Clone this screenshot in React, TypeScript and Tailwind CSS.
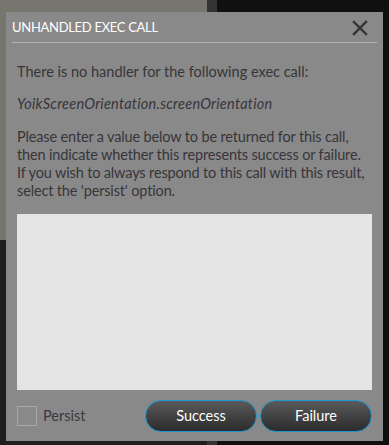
import React from 'react';

const App = () => {
  return (
    <div
      className="relative w-[389px] h-[445px] overflow-hidden bg-[#111111]"
      style={{ fontFamily: 'Lato, "Liberation Sans", sans-serif' }}
    >
      {/* Backdrop: dimmed map panel on the left, dark app chrome on the right */}
      <div className="flex h-full">
        <div className="w-[207px] h-full flex flex-col">
          <div className="h-[240px] bg-[#76766e]" />
          <div className="flex-1 bg-[#1e1e1e]" />
        </div>
        <div className="w-[10px] h-full bg-[#333333]" />
        <div className="flex-1 bg-[#101010]" />
      </div>

      {/* Modal */}
      <div className="absolute left-[6px] top-[12px] w-[377px] h-[429px] bg-[#898989] flex flex-col">
        <div className="mx-[6px] h-[31px] flex items-center justify-between border-b border-[#b4b4b4]">
          <span className="text-white text-[13px] tracking-[-0.3px] pt-[2px]">UNHANDLED EXEC CALL</span>
          <svg width="16" height="16" viewBox="0 0 16 16" className="mr-[9px] mt-[2px]">
            <path d="M2 2 L14 14 M14 2 L2 14" stroke="#333333" strokeWidth="2.4" strokeLinecap="square" />
          </svg>
        </div>

        <div className="px-[11px] flex flex-col text-[14.5px] leading-[18px] text-[#37353a]">
          <p className="mt-[20px]">There is no handler for the following exec call:</p>
          <p className="mt-[14px] italic tracking-[0.25px]">YoikScreenOrientation.screenOrientation</p>
          <p className="mt-[15px] tracking-[-0.15px]">
            Please enter a value below to be returned for this call, then indicate whether this represents success or failure.
            If you wish to always respond to this call with this result, select the 'persist' option.
          </p>
          <div className="mt-[14px] h-[176px] bg-[#e4e4e4]" />
          <div className="mt-[10px] flex items-center">
            <div className="w-[20px] h-[20px] border border-[#a8a8a8]" />
            <span className="ml-[6px] text-[#3a3840]">Persist</span>
            <div className="ml-auto flex gap-[3px]">
              <button className="w-[112px] h-[32px] rounded-full border border-[#1b98cf] bg-gradient-to-b from-[#5a5a5a] to-[#2c2c2c] text-white text-[14.5px]">
                Success
              </button>
              <button className="w-[112px] h-[32px] rounded-full border border-[#1b98cf] bg-gradient-to-b from-[#5a5a5a] to-[#2c2c2c] text-white text-[14.5px]">
                Failure
              </button>
            </div>
          </div>
        </div>
      </div>
    </div>
  );
};

export default App;
